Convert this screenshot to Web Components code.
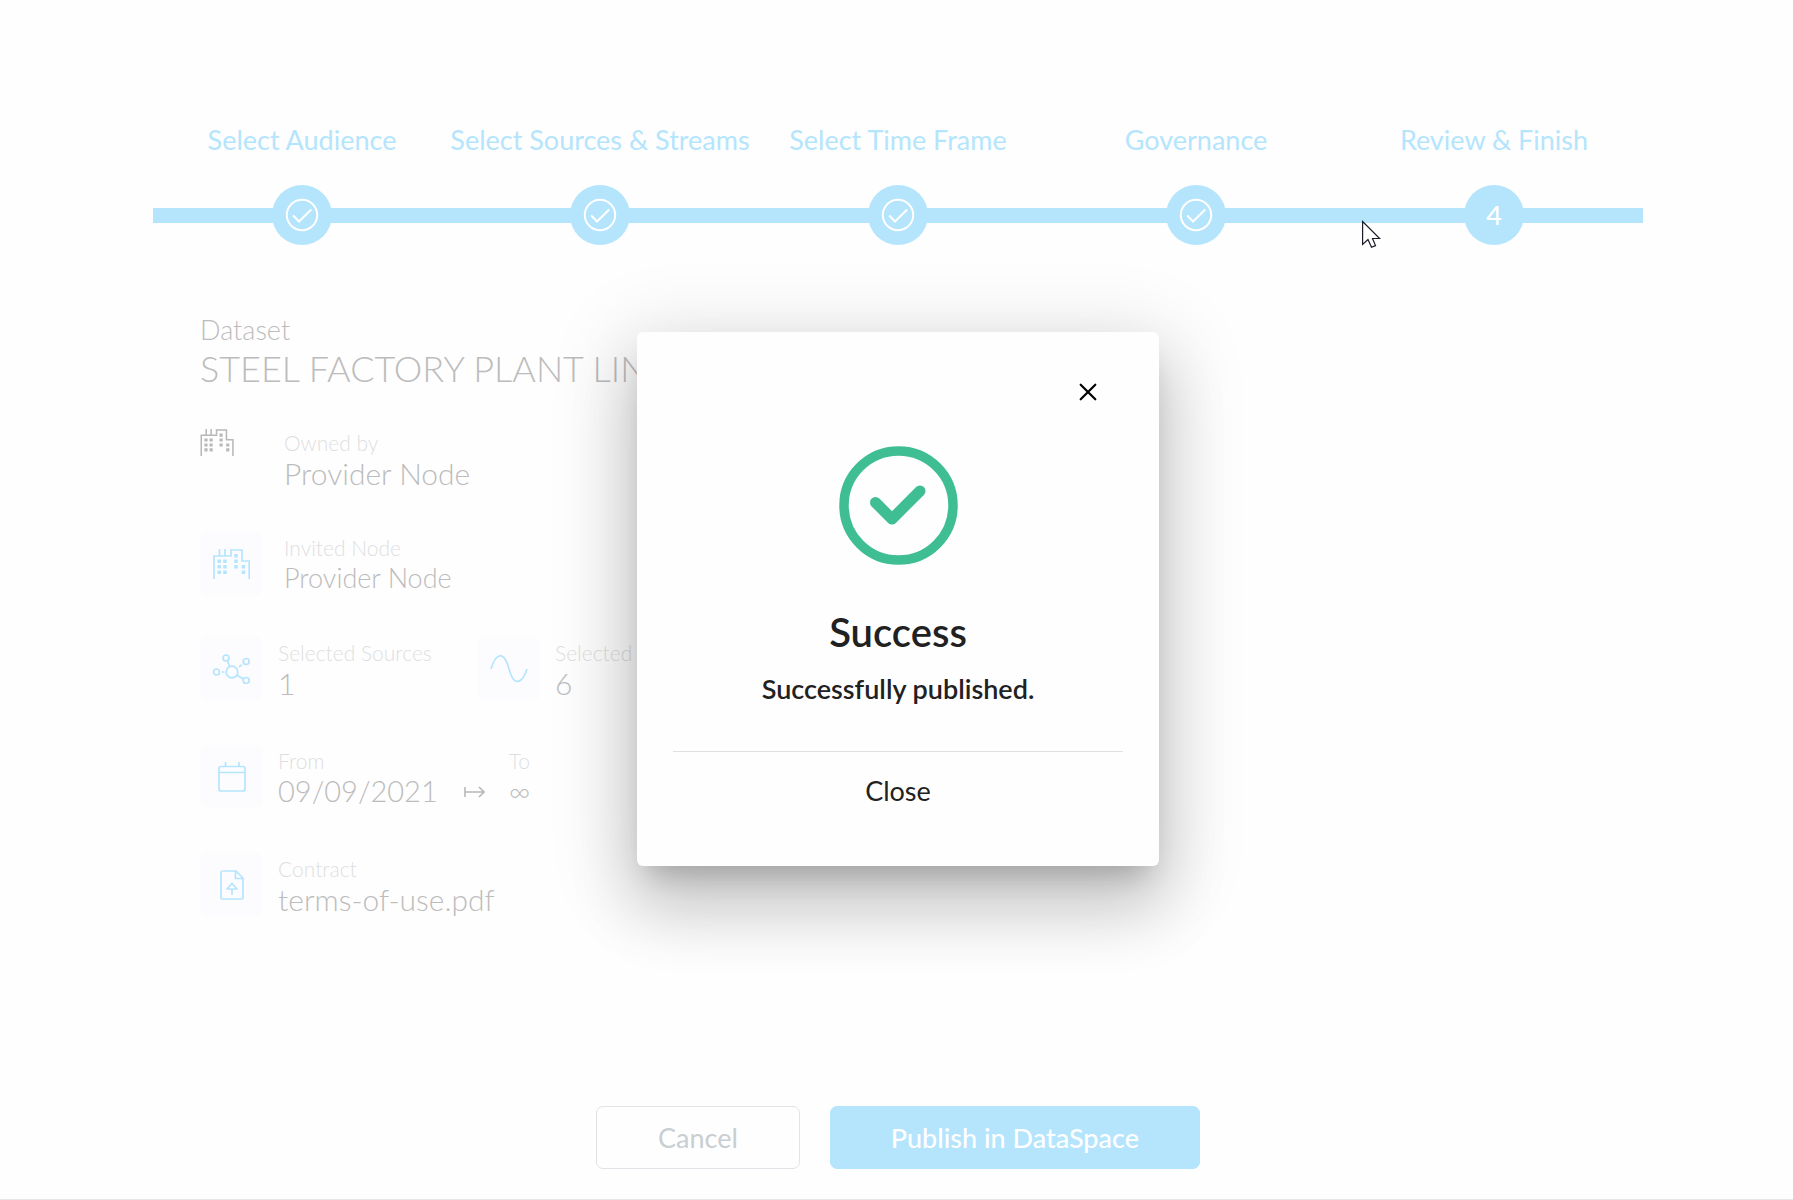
<!DOCTYPE html>
<html lang="en">
<head>
<meta charset="utf-8">
<title>Publish dataset</title>
<style>
  body { margin: 0; background: #fefefe; font-family: Lato, "Liberation Sans", sans-serif; color: #b8b8b8; }
</style>
</head>
<body>
<publish-page></publish-page>
<success-dialog heading="Success" message="Successfully published."></success-dialog>
<mouse-pointer></mouse-pointer>

<script>
const FACTORY = (w, h) => `<svg width="${w}" height="${h}" viewBox="0 0 37 30" fill="none" stroke="currentColor" stroke-width="1.7">
  <path d="M1 30V7H18V1H29V12H36.200V30M6.500 7V0M12 7V0"/>
  <path stroke="none" fill="currentColor" d="M4.500 10.500h3.500v3.500h-3.500zM10.200 10.500h3.500v3.500h-3.500zM4.500 16h3.500v3.500h-3.500zM10.200 16h3.500v3.500h-3.500zM4.500 21.500h3.500v3.500h-3.500zM10.200 21.500h3.500v3.500h-3.500zM21.300 5h3.500v3.500h-3.500zM21.300 10.500h3.500v3.500h-3.500zM21.300 16h3.500v3.500h-3.500zM28.700 16h3.500v3.500h-3.500zM28.700 21.500h3.500v3.500h-3.500z"/></svg>`;
const ICONS = {
  owner: FACTORY(34, 27),
  factory: FACTORY(37, 30),
  sources: `<svg width="37" height="30" viewBox="0 0 37 30" fill="none" stroke="currentColor" stroke-width="1.700">
    <circle cx="19" cy="18" r="5.800"/><circle cx="13" cy="4" r="3"/><circle cx="33.200" cy="7.500" r="3"/><circle cx="3.500" cy="18" r="3"/><circle cx="33.200" cy="26.500" r="3"/>
    <path d="M14.200 6.700L16.700 12.500M24 21.200L30.500 25M9 18H11.500M26 13L28.800 10.700"/></svg>`,
  streams: `<svg width="38" height="28" viewBox="0 0 38 28" fill="none" stroke="currentColor" stroke-width="1.700"><path d="M1 14C5.500-1.500 13-3.500 17.500 9L20.500 18.500C24.500 30 32 29.500 37 14"/></svg>`,
  calendar: `<svg width="28" height="30" viewBox="0 0 28 30" fill="none" stroke="currentColor" stroke-width="1.700"><rect x="1" y="4.500" width="26" height="24.500" rx="2"/><path d="M1 10.500H27M7.500 4.500V0M21 4.500V0"/></svg>`,
  contract: `<svg width="24" height="30" viewBox="0 0 24 30" fill="none" stroke="currentColor" stroke-width="1.700" stroke-linejoin="round"><path d="M3 1H16L23 8V27.500Q23 29 21.500 29H2.500Q1 29 1 27.500V2.500Q1 1 2.500 1M15.500 1V8.500H23M7 19L12 13.500L17 19ZM12 19V25"/></svg>`
};

function define(name, render) {
  customElements.define(name, class extends HTMLElement {
    connectedCallback() {
      if (this.shadowRoot) return;
      this.attachShadow({ mode: "open" }).innerHTML = render(this);
    }
  });
}

define("wizard-step", el => `
  <style>
    :host { flex: 1 1 0; min-width: 0; display: flex; flex-direction: column; align-items: center; gap: 28px; color: #b4e5fd; }
    span { font-size: 27px; line-height: 34px; white-space: nowrap; }
    .track { align-self: stretch; display: flex; justify-content: center; background: linear-gradient(#b4e5fd, #b4e5fd) center / 100% 15px no-repeat; }
    .dot { width: 60px; height: 60px; border-radius: 50%; background: #b4e5fd; color: #fff; display: grid; place-items: center; font-size: 27px; line-height: 34px; font-weight: 500; }
  </style>
  <span><slot></slot></span>
  <div class="track"><div class="dot">${el.hasAttribute("done")
    ? `<svg width="34" height="34" viewBox="-17 -17 34 34" fill="none" stroke="#fff" stroke-width="2" stroke-linecap="round"><circle r="15.200"/><path d="M-8.300 1L-3 6.500L8.700-5"/></svg>`
    : el.getAttribute("number")}</div></div>`);

define("info-item", el => `
  <style>
    :host { display: flex; height: 63px; }
    .icon { flex: none; box-sizing: border-box; width: 63px; display: grid; place-items: center; border-radius: 7px; background: #fcfcff; color: #b4e5fd; }
    :host([plain]) .icon { background: none; color: #b8b8b8; place-items: start; padding-top: 2px; }
    .text { margin-left: 15px; }
    :host([wide]) .text { margin-left: 21px; }
  </style>
  <div class="icon">${ICONS[el.getAttribute("icon")]}</div><div class="text"><slot></slot></div>`);

define("info-field", el => `
  <style>
    :host { display: block; }
    .label { font-size: 21px; line-height: 32px; font-weight: 300; color: #dedede; white-space: nowrap; }
    .value { font-size: 30px; line-height: 28px; font-weight: 300; color: #bcbcbc; white-space: nowrap; }
    :host([small]) .value { font-size: 27px; }
    :host([date]) .value { font-size: 29px; }
  </style>
  <div class="label">${el.getAttribute("label")}</div><div class="value"><slot></slot></div>`);

define("dataset-review", () => `
  <style>
    :host { display: block; padding: 68px 47px 0; }
    .kind { font-size: 27px; line-height: 34px; font-weight: 300; color: #bcbcbc; }
    h1 { margin: 0 0 37px; font-size: 36px; line-height: 43px; font-weight: 300; color: #bcbcbc; }
    .group { display: flex; flex-direction: column; gap: 42px; margin-bottom: 45px; }
    .row { display: grid; grid-template-columns: 277px auto; justify-content: start; }
    .dates { display: flex; }
    .dates svg { margin: 37px 24px 0 26px; }
  </style>
  <div class="kind">Dataset</div>
  <h1>STEEL FACTORY PLANT LINE</h1>
  <div class="group">
    <info-item icon="owner" plain wide><info-field label="Owned by">Provider Node</info-field></info-item>
    <info-item icon="factory" wide><info-field label="Invited Node" small>Provider Node</info-field></info-item>
    <div class="row">
      <info-item icon="sources"><info-field label="Selected Sources">1</info-field></info-item>
      <info-item icon="streams"><info-field label="Selected Streams">6</info-field></info-item>
    </div>
  </div>
  <div class="group">
    <info-item icon="calendar"><div class="dates">
      <info-field label="From" date>09/09/2021</info-field>
      <svg width="21" height="20" viewBox="0 0 21 20" fill="none" stroke="#b8b8b8" stroke-width="1.600"><path d="M1 5V15M1 10H20M15 5L20 10L15 15"/></svg>
      <info-field label="To" date>∞</info-field>
    </div></info-item>
  </div>
  <info-item icon="contract"><info-field label="Contract">terms-of-use.pdf</info-field></info-item>`);

define("wizard-actions", () => `
  <style>
    :host { display: flex; justify-content: center; gap: 30px; padding-bottom: 30px; }
    button { box-sizing: border-box; height: 63px; padding: 0 61px; border: 1px solid #e0e4e8; border-radius: 7px; background: #fefefe; color: #c8ced2; font: 400 27px/34px Lato, "Liberation Sans", sans-serif; }
    .primary { padding: 0 60px; background: #b4e5fd; border-color: #b4e5fd; color: #fff; font-weight: 500; }
  </style>
  <button type="button">Cancel</button><button type="button" class="primary">Publish in DataSpace</button>`);

define("publish-page", () => `
  <style>
    :host { display: flex; flex-direction: column; box-sizing: border-box; min-height: 100vh; padding: 123px 0 0; border-bottom: 1px solid #e6e6e6; }
    main { padding: 0 150px 0 153px; }
    nav { display: flex; }
    wizard-actions { margin-top: auto; padding-left: 3px; }
  </style>
  <main>
    <nav aria-label="Progress">
      <wizard-step done>Select Audience</wizard-step>
      <wizard-step done>Select Sources &amp; Streams</wizard-step>
      <wizard-step done>Select Time Frame</wizard-step>
      <wizard-step done>Governance</wizard-step>
      <wizard-step number="4">Review &amp; Finish</wizard-step>
    </nav>
    <dataset-review></dataset-review>
  </main>
  <wizard-actions></wizard-actions>`);

define("success-dialog", el => `
  <style>
    :host { position: absolute; inset: 0 0 2px 3px; display: grid; place-items: center; }
    section { box-sizing: border-box; width: 522px; padding: 42px 36px 47px; border-radius: 6px; background: #fefefe; color: #212121; display: flex; flex-direction: column; align-items: center; text-align: center;
      box-shadow: 0 19px 26px -12px rgba(0,0,0,.2), 0 42px 66px 5px rgba(0,0,0,.14), 0 16px 80px 14px rgba(0,0,0,.12); }
    button { border: 0; padding: 0; background: none; color: inherit; font: 400 27px/34px Lato, "Liberation Sans", sans-serif; }
    .x { align-self: flex-end; width: 36px; height: 36px; margin-right: 17px; display: grid; place-items: center; }
    .mark { margin: 36px 0 43px; }
    h2 { margin: 0; font-size: 40px; line-height: 48px; font-weight: 600; }
    p { margin: 16px 0 45px; font-size: 27px; line-height: 34px; font-weight: 600; }
    .close { align-self: stretch; border-top: 1px solid #e0e0e0; padding: 22px 0 11px; }
  </style>
  <section role="dialog" aria-modal="true" aria-labelledby="t">
    <button type="button" class="x" aria-label="Dismiss"><svg width="18" height="18" viewBox="0 0 18 18" stroke="#000" stroke-width="2.200" stroke-linecap="round"><path d="M1.700 1.700L16.300 16.300M16.300 1.700L1.700 16.300"/></svg></button>
    <svg class="mark" width="119" height="119" viewBox="0 0 119 119" fill="none" stroke="#3fbe94" stroke-linecap="round" stroke-linejoin="round"><circle cx="59.500" cy="59.500" r="54.500" stroke-width="9.500"/><path d="M36.500 56.500L53 73L81 45" stroke-width="11"/></svg>
    <h2 id="t">${el.getAttribute("heading")}</h2>
    <p>${el.getAttribute("message")}</p>
    <button type="button" class="close">Close</button>
  </section>`);

define("mouse-pointer", () => `
  <style>:host { position: absolute; left: 1362px; top: 220px; pointer-events: none; } svg { display: block; }</style>
  <svg width="19" height="29" viewBox="0 0 19 29" fill="#fff" stroke="#1c1c26" stroke-width="1.200"><path d="M.600 1.500V24.500L6 19.500L9.500 27.300L13.500 25.600L10.500 18.500H17.700Z"/></svg>`);
</script>
</body>
</html>
